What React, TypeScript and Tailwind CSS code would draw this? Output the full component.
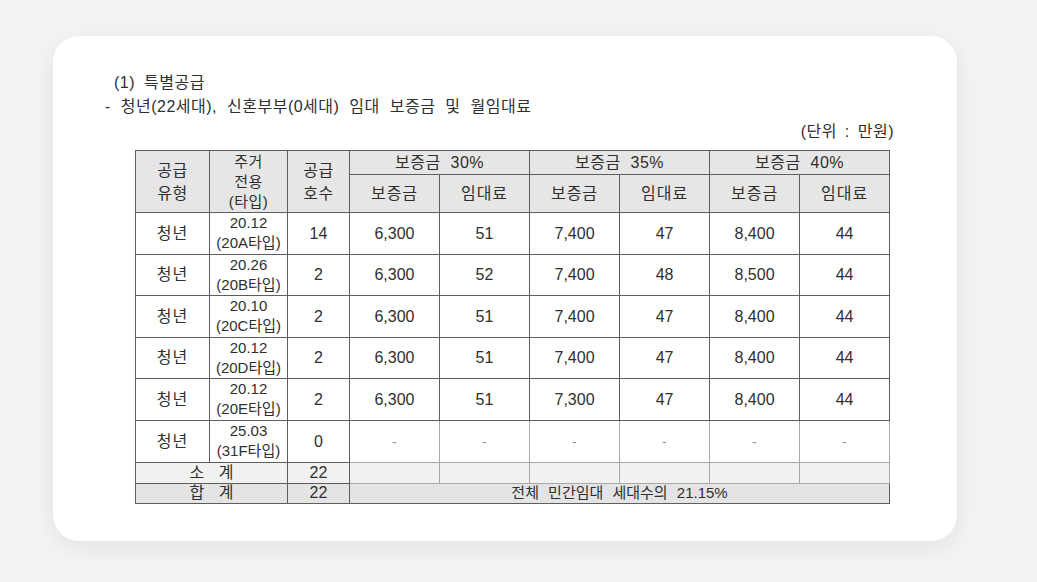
import React from "react";

type Row = { type: string; area: string; tname: string; n: string; v: string[] };

const rows: Row[] = [
  { type: "청년", area: "20.12", tname: "(20A타입)", n: "14", v: ["6,300", "51", "7,400", "47", "8,400", "44"] },
  { type: "청년", area: "20.26", tname: "(20B타입)", n: "2", v: ["6,300", "52", "7,400", "48", "8,500", "44"] },
  { type: "청년", area: "20.10", tname: "(20C타입)", n: "2", v: ["6,300", "51", "7,400", "47", "8,400", "44"] },
  { type: "청년", area: "20.12", tname: "(20D타입)", n: "2", v: ["6,300", "51", "7,400", "47", "8,400", "44"] },
  { type: "청년", area: "20.12", tname: "(20E타입)", n: "2", v: ["6,300", "51", "7,300", "47", "8,400", "44"] },
];

const cell = "border border-[#5e5e5e] text-center align-middle p-0";
const light = "border border-[#a8a8a8] text-center align-middle p-0";

export default function App() {
  return (
    <div
      className="w-[1037px] h-[582px] bg-[#f3f3f2] pt-[36px] pl-[53px] text-[#2f2f2f]"
      style={{ fontFamily: '"Liberation Sans", "Noto Sans CJK KR", sans-serif' }}
    >
      <div className="w-[904px] h-[505px] bg-white rounded-[26px] shadow-[0_6px_24px_rgba(0,0,0,0.07)] pt-[35px] pl-[52px] pr-[66px]">
        <div className="text-[16px] leading-[24px] pl-[9px] tracking-[0.5px] [word-spacing:4px]">(1) 특별공급</div>
        <div className="text-[16px] leading-[24px] tracking-[0.5px] [word-spacing:5px]">- 청년(22세대), 신혼부부(0세대) 임대 보증금 및 월임대료</div>
        <div className="text-[16px] leading-[26px] text-right tracking-[0.5px] [word-spacing:3px] -mr-[3px]">(단위 : 만원)</div>
        <div className="pl-[30px] pt-[5px]">
          <table className="border-collapse table-fixed w-[754px] text-[16px] leading-[19px] border border-[#5e5e5e]">
            <colgroup>
              <col className="w-[74px]" />
              <col className="w-[78px]" />
              <col className="w-[62px]" />
              <col className="w-[90px]" />
              <col className="w-[90px]" />
              <col className="w-[90px]" />
              <col className="w-[90px]" />
              <col className="w-[90px]" />
              <col className="w-[90px]" />
            </colgroup>
            <thead>
              <tr className="h-[24px] bg-[#e6e6e6]">
                <td rowSpan={2} className={`${cell} leading-[23px] tracking-[0.5px]`}>공급<br />유형</td>
                <td rowSpan={2} className={`${cell} text-[15px] leading-[20px] tracking-[0.5px]`}>주거<br />전용<br />(타입)</td>
                <td rowSpan={2} className={`${cell} leading-[23px] tracking-[0.5px]`}>공급<br />호수</td>
                <td colSpan={2} className={`${cell} leading-[20px] tracking-[0.5px] [word-spacing:5px]`}>보증금 30%</td>
                <td colSpan={2} className={`${cell} leading-[20px] tracking-[0.5px] [word-spacing:5px]`}>보증금 35%</td>
                <td colSpan={2} className={`${cell} leading-[20px] tracking-[0.5px] [word-spacing:5px]`}>보증금 40%</td>
              </tr>
              <tr className="h-[38px] bg-[#e6e6e6]">
                <td className={`${cell} tracking-[1px]`}>보증금</td>
                <td className={`${cell} tracking-[1px]`}>임대료</td>
                <td className={`${cell} tracking-[1px]`}>보증금</td>
                <td className={`${cell} tracking-[1px]`}>임대료</td>
                <td className={`${cell} tracking-[1px]`}>보증금</td>
                <td className={`${cell} tracking-[1px]`}>임대료</td>
              </tr>
            </thead>
            <tbody>
              {rows.map((r, i) => (
                <tr key={i} className="h-[41.5px]">
                  <td className={`${cell} tracking-[1px]`}>{r.type}</td>
                  <td className={`${cell} text-[15px] leading-[20px]`}>{r.area}<br />{r.tname}</td>
                  <td className={cell}>{r.n}</td>
                  {r.v.map((x, j) => (
                    <td key={j} className={cell}>{x}</td>
                  ))}
                </tr>
              ))}
              <tr className="h-[42px]">
                <td className={`${cell} tracking-[1px]`}>청년</td>
                <td className={`${cell} text-[15px] leading-[20px]`}>25.03<br />(31F타입)</td>
                <td className={cell}>0</td>
                {[0, 1, 2, 3, 4, 5].map((j) => (
                  <td key={j} className={`${light} text-[#888] text-[13px]`}>-</td>
                ))}
              </tr>
              <tr className="h-[21px] bg-[#f1f1f1]">
                <td colSpan={2} className={`${cell} leading-[18px] [word-spacing:10px]`}>소 계</td>
                <td className={`${cell} leading-[18px]`}>22</td>
                {[0, 1, 2, 3, 4, 5].map((j) => (
                  <td key={j} className={light}></td>
                ))}
              </tr>
              <tr className="h-[20px] bg-[#e4e4e4]">
                <td colSpan={2} className={`${cell} leading-[18px] [word-spacing:10px]`}>합 계</td>
                <td className={`${cell} leading-[18px]`}>22</td>
                <td colSpan={6} className={`${cell} leading-[18px] text-[15px] [word-spacing:5px]`}>전체 민간임대 세대수의 21.15%</td>
              </tr>
            </tbody>
          </table>
        </div>
      </div>
    </div>
  );
}
